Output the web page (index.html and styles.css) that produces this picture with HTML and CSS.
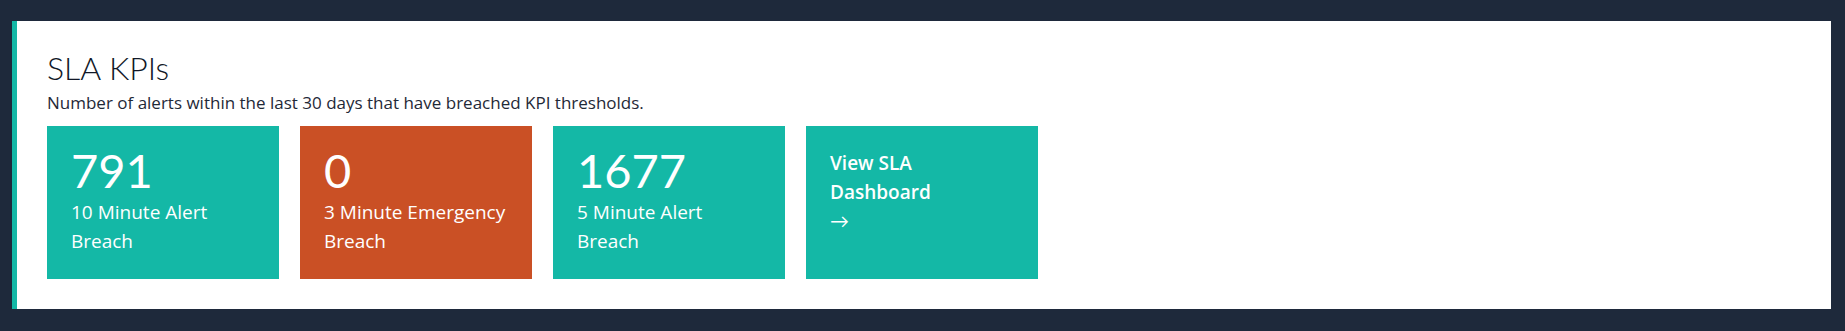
FILE: index.html
```html
<!DOCTYPE html>
<html lang="en">
<head>
<meta charset="utf-8">
<title>SLA KPIs</title>
<link rel="stylesheet" href="styles.css">
</head>
<body>
<section class="panel">
  <h2 class="panel-title">SLA KPIs</h2>
  <p class="panel-desc">Number of alerts within the last 30 days that have breached KPI thresholds.</p>
  <div class="kpi-row">
    <div class="kpi kpi-teal">
      <div class="kpi-value">791</div>
      <div class="kpi-label">10 Minute Alert Breach</div>
    </div>
    <div class="kpi kpi-orange">
      <div class="kpi-value">0</div>
      <div class="kpi-label">3 Minute Emergency Breach</div>
    </div>
    <div class="kpi kpi-teal">
      <div class="kpi-value">1677</div>
      <div class="kpi-label">5 Minute Alert Breach</div>
    </div>
    <a class="kpi kpi-teal kpi-link" href="#">
      <span class="kpi-link-text">View SLA Dashboard</span>
      <span class="kpi-link-arrow">&rarr;</span>
    </a>
  </div>
</section>
</body>
</html>
```

FILE: styles.css
```css
html, body {
  margin: 0;
  padding: 0;
}
body {
  background: #1e293b;
  font-family: "Open Sans", Lato, sans-serif;
  padding: 21px 14px 21px 12px;
}
.panel {
  background: #ffffff;
  border-left: 5px solid #14b8a6;
  padding: 28px 30px 30px 30px;
}
.panel-title {
  margin: 0;
  font-family: Lato, "Open Sans", sans-serif;
  font-size: 32px;
  line-height: 38px;
  font-weight: 300;
  color: #111827;
}
.panel-desc {
  margin: 4px 0 11px 0;
  font-size: 17px;
  line-height: 24px;
  color: #1f2937;
}
.kpi-row {
  display: flex;
  gap: 21px;
}
.kpi {
  width: 232px;
  height: 153px;
  box-sizing: border-box;
  padding: 19px 18px 20px 24px;
  color: #ffffff;
  text-decoration: none;
  display: flex;
  flex-direction: column;
}
.kpi-teal { background: #14b8a6; }
.kpi-orange { background: #ca5025; }
.kpi-value {
  font-family: Lato, "Open Sans", sans-serif;
  font-size: 47px;
  line-height: 51px;
  font-weight: 400;
}
.kpi-label {
  font-size: 19px;
  line-height: 29px;
  margin-top: 2px;
}
.kpi-link {
  font-size: 19px;
  line-height: 29px;
  font-weight: 600;
  padding-top: 23px;
  padding-right: 60px;
}
.kpi-link-arrow {
  font-weight: 400;
}
```
